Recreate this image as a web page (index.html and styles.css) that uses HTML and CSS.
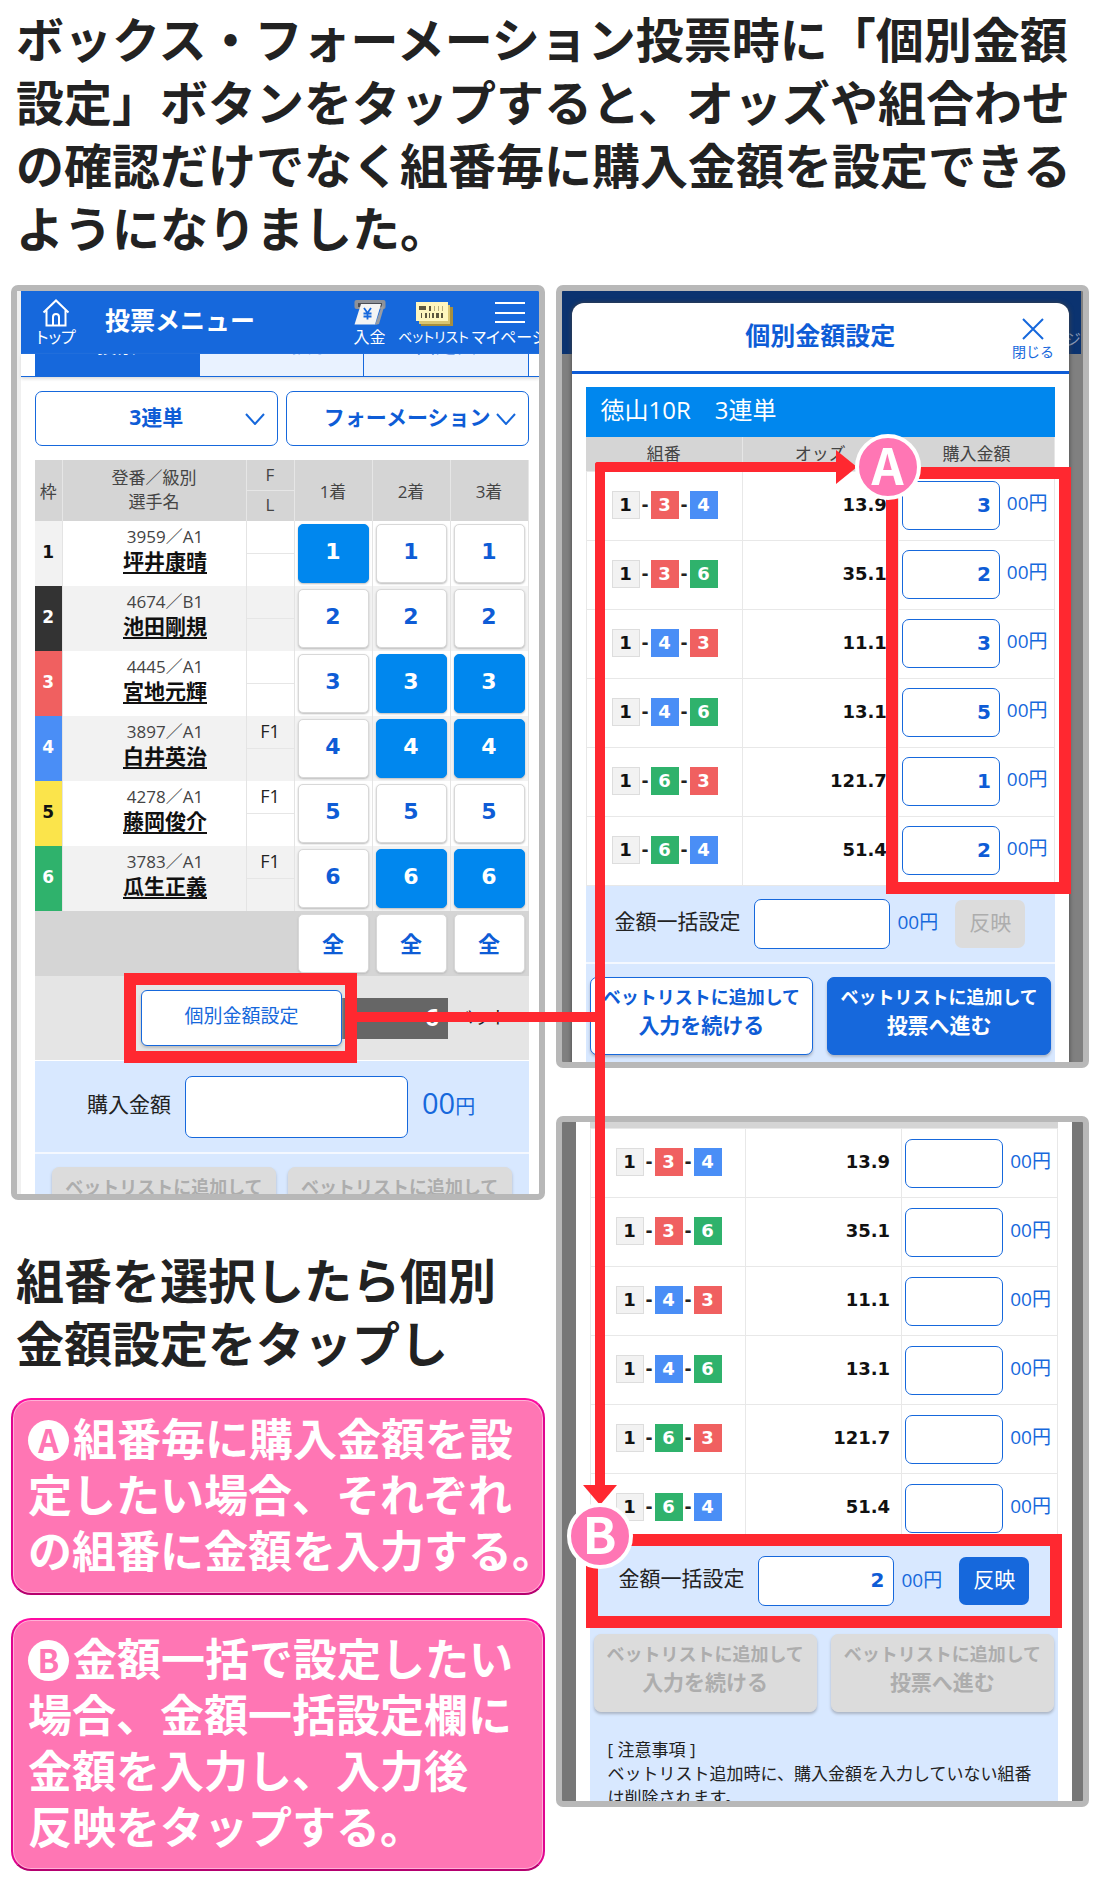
FILE: index.html
```
<!DOCTYPE html>
<html lang="ja">
<head>
  <meta charset="UTF-8">
  <meta name="viewport" content="width=device-width, initial-scale=1.0">
  <title>個別金額設定</title>
  <link rel="stylesheet" href="styles.css">
</head>
<body>
  <h1 class="lead">ボックス・フォーメーション投票時に「個別金額<br>設定」ボタンをタップすると、オッズや組合わせ<br>の確認だけでなく組番毎に購入金額を設定できる<br>ようになりました。</h1>

  <main class="columns">
    <div class="col-left">
      <section class="phone phone-menu">
        <div class="screen">
          <header class="nav">
            <a class="nav-item nav-home" href="#">
              <svg width="28" height="28" viewBox="0 0 28 28" fill="none" stroke="#fff" stroke-width="2">
                <path d="M1.5 13.5 14 1.5l12.500 12M4.500 11v15.500h19V11M11 26.500v-8.500a3 3 0 0 1 6 0v8.500"/>
              </svg>
              <span>トップ</span>
            </a>
            <h2 class="nav-title">投票メニュー</h2>
            <div class="nav-group">
              <a class="nav-item" href="#">
                <svg width="32" height="28" viewBox="0 0 32 28">
                  <rect x="0.500" y="1" width="31" height="9" rx="2" fill="#8d9199"/>
                  <path d="M4 4h24v4H4z" fill="#4a4d55"/>
                  <path d="M28 6 21 26l4-1 5-17z" fill="#9a9da3"/>
                  <path d="M7 5h20l-6 20.500H0.500z" fill="#f4f4f4"/>
                  <path d="M10 9l3.500 5L17 9M13.500 14v6.500M9.500 14.500h8M9.500 17.500h8" fill="none" stroke="#1668dc" stroke-width="1.800"/>
                </svg>
                <span>入金</span>
              </a>
              <a class="nav-item nav-list" href="#">
                <svg width="38" height="28" viewBox="0 0 38 28">
                  <path d="M6 8h32v19H6z" fill="#a88f3c"/>
                  <path d="M4 6h31v19H4z" fill="#d9c574"/>
                  <path d="M1 3h32v19H1z" fill="#fff6be"/>
                  <path d="M4 7h7v4H4zM14 7h2v5h-2zM6 14h1v5H6zM10 14h2v5h-2zM14 14h1v5h-1zM17 14h2v5h-2zM21 14h3v5h-3zM26 14h2v5h-2z" fill="#5d573f"/>
                  <path d="M19 7h1v5h-1zM23 7h1v5h-1zM27 7h1v5h-1z" fill="#b7ad7b"/>
                </svg>
                <span>ベットリスト</span>
              </a>
              <a class="nav-item nav-mypage" href="#">
                <svg width="30" height="28" viewBox="0 0 30 28" stroke="#fff" stroke-width="2">
                  <path d="M0 4h30M0 14h30M0 23h30"/>
                </svg>
                <span>マイページ</span>
              </a>
            </div>
          </header>

          <nav class="tabs">
            <a class="tab tab-on" href="#">投票</a>
            <a class="tab" href="#">オッズ投票</a>
            <a class="tab" href="#">出走表</a>
          </nav>

          <div class="content">
            <div class="selects">
              <label class="select-box">
                <select aria-label="勝式"><option>3連単</option></select>
                <svg width="20" height="12" viewBox="0 0 20 12" fill="none" stroke="#1668dc" stroke-width="2"><path d="M1 1l9 10 9-10"/></svg>
              </label>
              <label class="select-box">
                <select aria-label="投票方法"><option>フォーメーション</option></select>
                <svg width="20" height="12" viewBox="0 0 20 12" fill="none" stroke="#1668dc" stroke-width="2"><path d="M1 1l9 10 9-10"/></svg>
              </label>
            </div>

            <table class="racers">
              <colgroup>
                <col class="c-waku"><col class="c-name"><col class="c-fl"><col class="c-pick"><col class="c-pick"><col class="c-pick">
              </colgroup>
              <thead>
                <tr>
                  <th>枠</th>
                  <th class="two-line">登番／級別<br>選手名</th>
                  <th><div class="fl"><span>F</span><span>L</span></div></th>
                  <th>1着</th><th>2着</th><th>3着</th>
                </tr>
              </thead>
              <tbody>
                <tr>
                  <td class="waku bg1">1</td>
                  <td class="racer">3959／A1<a href="#">坪井康晴</a></td>
                  <td><div class="fl"><span></span><span></span></div></td>
                  <td><button class="pick on">1</button></td><td><button class="pick">1</button></td><td><button class="pick">1</button></td>
                </tr>
                <tr>
                  <td class="waku bg2">2</td>
                  <td class="racer">4674／B1<a href="#">池田剛規</a></td>
                  <td><div class="fl"><span></span><span></span></div></td>
                  <td><button class="pick">2</button></td><td><button class="pick">2</button></td><td><button class="pick">2</button></td>
                </tr>
                <tr>
                  <td class="waku bg3">3</td>
                  <td class="racer">4445／A1<a href="#">宮地元輝</a></td>
                  <td><div class="fl"><span></span><span></span></div></td>
                  <td><button class="pick">3</button></td><td><button class="pick on">3</button></td><td><button class="pick on">3</button></td>
                </tr>
                <tr>
                  <td class="waku bg4">4</td>
                  <td class="racer">3897／A1<a href="#">白井英治</a></td>
                  <td><div class="fl"><span>F1</span><span></span></div></td>
                  <td><button class="pick">4</button></td><td><button class="pick on">4</button></td><td><button class="pick on">4</button></td>
                </tr>
                <tr>
                  <td class="waku bg5">5</td>
                  <td class="racer">4278／A1<a href="#">藤岡俊介</a></td>
                  <td><div class="fl"><span>F1</span><span></span></div></td>
                  <td><button class="pick">5</button></td><td><button class="pick">5</button></td><td><button class="pick">5</button></td>
                </tr>
                <tr>
                  <td class="waku bg6">6</td>
                  <td class="racer">3783／A1<a href="#">瓜生正義</a></td>
                  <td><div class="fl"><span>F1</span><span></span></div></td>
                  <td><button class="pick">6</button></td><td><button class="pick on">6</button></td><td><button class="pick on">6</button></td>
                </tr>
                <tr class="all-row">
                  <td colspan="3"></td>
                  <td><button class="pick">全</button></td><td><button class="pick">全</button></td><td><button class="pick">全</button></td>
                </tr>
              </tbody>
            </table>

            <div class="bets">
              <div class="marked-button"><button class="btn-each">個別金額設定</button></div>
              <span class="bets-count">6</span>
              <span class="bets-unit">ベット</span>
            </div>
            <div class="amount">
              <label for="amount">購入金額</label>
              <input type="text" id="amount">
              <span class="unit"><span class="zeros">00</span>円</span>
            </div>
            <div class="actions actions-menu">
              <button class="action" disabled>ベットリストに追加して<span>入力を続ける</span></button>
              <button class="action" disabled>ベットリストに追加して<span>投票へ進む</span></button>
            </div>
          </div>
        </div>
      </section>

      <h2 class="lead lead-sub">組番を選択したら個別<br>金額設定をタップし</h2>

      <p class="note"><span class="note-mark">A</span>組番毎に購入金額を設<br>定したい場合、それぞれ<br>の組番に金額を入力する。</p>
      <p class="note"><span class="note-mark">B</span>金額一括で設定したい<br>場合、金額一括設定欄に<br>金額を入力し、入力後<br>反映をタップする。</p>
    </div>

    <div class="col-right">
      <section class="phone phone-modal">
        <div class="dimmed-nav">マイページ</div>
        <div class="modal">
          <header class="modal-head">
            <h2>個別金額設定</h2>
            <button class="close">
              <svg width="22" height="22" viewBox="0 0 22 22" stroke="#1668dc" stroke-width="2"><path d="M1 1l20 20M21 1 1 21"/></svg>
              閉じる
            </button>
          </header>
          <div class="modal-body">
            <h3 class="race">徳山10R　3連単</h3>
            <div class="marked-table">
              <table class="odds">
                <thead><tr><th>組番</th><th>オッズ</th><th>購入金額</th></tr></thead>
                <tbody>
                  <tr><td class="combo"><b class="bg1">1</b>-<b class="bg3">3</b>-<b class="bg4">4</b></td><td class="rate">13.9</td><td class="pay"><input type="text" value="3" aria-label="1-3-4"><span class="yen">00円</span></td></tr>
                  <tr><td class="combo"><b class="bg1">1</b>-<b class="bg3">3</b>-<b class="bg6">6</b></td><td class="rate">35.1</td><td class="pay"><input type="text" value="2" aria-label="1-3-6"><span class="yen">00円</span></td></tr>
                  <tr><td class="combo"><b class="bg1">1</b>-<b class="bg4">4</b>-<b class="bg3">3</b></td><td class="rate">11.1</td><td class="pay"><input type="text" value="3" aria-label="1-4-3"><span class="yen">00円</span></td></tr>
                  <tr><td class="combo"><b class="bg1">1</b>-<b class="bg4">4</b>-<b class="bg6">6</b></td><td class="rate">13.1</td><td class="pay"><input type="text" value="5" aria-label="1-4-6"><span class="yen">00円</span></td></tr>
                  <tr><td class="combo"><b class="bg1">1</b>-<b class="bg6">6</b>-<b class="bg3">3</b></td><td class="rate">121.7</td><td class="pay"><input type="text" value="1" aria-label="1-6-3"><span class="yen">00円</span></td></tr>
                  <tr><td class="combo"><b class="bg1">1</b>-<b class="bg6">6</b>-<b class="bg4">4</b></td><td class="rate">51.4</td><td class="pay"><input type="text" value="2" aria-label="1-6-4"><span class="yen">00円</span></td></tr>
                </tbody>
              </table>
              <div class="frame frame-a"></div>
            </div>
            <div class="batch">
              <label for="batch-a">金額一括設定</label>
              <input type="text" id="batch-a">
              <span class="yen">00円</span>
              <button class="apply" disabled>反映</button>
            </div>
            <div class="actions">
              <button class="action">ベットリストに追加して<span>入力を続ける</span></button>
              <button class="action primary">ベットリストに追加して<span>投票へ進む</span></button>
            </div>
          </div>
        </div>
      </section>

      <section class="phone phone-batch">
        <div class="sheet">
          <div class="sheet-top"></div>
          <table class="odds">
            <tbody>
              <tr><td class="combo"><b class="bg1">1</b>-<b class="bg3">3</b>-<b class="bg4">4</b></td><td class="rate">13.9</td><td class="pay"><input type="text" aria-label="1-3-4"><span class="yen">00円</span></td></tr>
              <tr><td class="combo"><b class="bg1">1</b>-<b class="bg3">3</b>-<b class="bg6">6</b></td><td class="rate">35.1</td><td class="pay"><input type="text" aria-label="1-3-6"><span class="yen">00円</span></td></tr>
              <tr><td class="combo"><b class="bg1">1</b>-<b class="bg4">4</b>-<b class="bg3">3</b></td><td class="rate">11.1</td><td class="pay"><input type="text" aria-label="1-4-3"><span class="yen">00円</span></td></tr>
              <tr><td class="combo"><b class="bg1">1</b>-<b class="bg4">4</b>-<b class="bg6">6</b></td><td class="rate">13.1</td><td class="pay"><input type="text" aria-label="1-4-6"><span class="yen">00円</span></td></tr>
              <tr><td class="combo"><b class="bg1">1</b>-<b class="bg6">6</b>-<b class="bg3">3</b></td><td class="rate">121.7</td><td class="pay"><input type="text" aria-label="1-6-3"><span class="yen">00円</span></td></tr>
              <tr><td class="combo"><b class="bg1">1</b>-<b class="bg6">6</b>-<b class="bg4">4</b></td><td class="rate">51.4</td><td class="pay"><input type="text" aria-label="1-6-4"><span class="yen">00円</span></td></tr>
            </tbody>
          </table>
          <div class="batch">
            <label for="batch-b">金額一括設定</label>
            <input type="text" id="batch-b" value="2">
            <span class="yen">00円</span>
            <button class="apply">反映</button>
            <div class="frame frame-b"></div>
          </div>
          <div class="actions">
            <button class="action" disabled>ベットリストに追加して<span>入力を続ける</span></button>
            <button class="action" disabled>ベットリストに追加して<span>投票へ進む</span></button>
          </div>
          <p class="caution">[ 注意事項 ]<br>ベットリスト追加時に、購入金額を入力していない組番は削除されます。</p>
        </div>
      </section>

      <!-- flow arrows, from the button to A and B -->
      <div class="line line-in"></div>
      <div class="line line-down"></div>
      <div class="line line-across"></div>
      <div class="arrow arrow-right"></div>
      <div class="arrow arrow-down"></div>
      <div class="badge badge-a">A</div>
      <div class="badge badge-b">B</div>
    </div>
  </main>
</body>
</html>
```
FILE: styles.css
```
* {
  margin: 0;
  padding: 0;
  box-sizing: border-box;
}

body {
  padding: 6px 11px 28px;
  background: #fff;
  color: #222;
  font-family: "Open Sans", "Noto Sans CJK JP", sans-serif;
  font-size: 17px;
}

button, input, select {
  font-family: inherit;
}

a {
  color: inherit;
  text-decoration: none;
}

.lead {
  padding-left: 5px;
  font-family: "Noto Sans CJK JP", sans-serif;
  font-size: 48px;
  font-weight: 700;
  line-height: 63px;
  white-space: nowrap;
}

.columns {
  display: grid;
  grid-template-columns: 1fr 1fr;
  gap: 11px;
  margin-top: 27px;
}

.col-left {
  min-width: 0;
}

.col-right {
  position: relative;
  min-width: 0;
}

/* phones */
.phone {
  position: relative;
  border: 6px solid #b8b8b8;
  border-radius: 7px;
  overflow: hidden;
  background: #fff;
}

.phone-menu {
  height: 915px;
}

.phone-modal {
  height: 783px;
  margin-bottom: 48px;
  background: #808080;
}

.phone-batch {
  height: 691px;
  background: #777;
}

.screen {
  border-left: 4px solid #f0f0f0;
}

/* top bar */
.nav {
  display: flex;
  align-items: center;
  height: 63px;
  padding-left: 10px;
  background: #1668dc;
  color: #fff;
}

.nav-item {
  display: flex;
  flex-direction: column;
  align-items: center;
  width: 50px;
  font-size: 16px;
  line-height: 20px;
  white-space: nowrap;
  font-feature-settings: "palt";
}

.nav-title {
  margin-left: 24px;
  padding-bottom: 6px;
  font-size: 25px;
  line-height: 30px;
}

.nav-group {
  display: flex;
  margin-left: auto;
  margin-right: -8px;
}

.nav-list {
  width: 78px;
  font-size: 14px;
}

.nav-mypage {
  width: 74px;
}

.tabs {
  display: flex;
  align-items: flex-end;
  height: 23px;
  padding: 0 10px 0 14px;
  overflow: hidden;
  border-bottom: 1px solid #1668dc;
  box-shadow: 0 2px 3px #ddd;
}

.tab {
  flex: 1;
  height: 60px;
  border-right: 1px solid #1668dc;
  background: #e9f2ff;
  color: #1668dc;
  font-size: 20px;
  line-height: 60px;
  text-align: center;
}

.tab-on {
  background: #1668dc;
  color: #fff;
  font-weight: 700;
}

.content {
  padding: 14px 10px 0 14px;
}

.selects {
  display: grid;
  grid-template-columns: 1fr 1fr;
  gap: 8px;
  margin-bottom: 14px;
}

.select-box {
  display: flex;
  align-items: center;
  height: 55px;
  padding-right: 12px;
  border: 1px solid #1668dc;
  border-radius: 7px;
}

.select-box select {
  flex: 1;
  min-width: 0;
  height: 53px;
  padding: 0 0 4px 32px;
  border: none;
  outline: none;
  appearance: none;
  background: none;
  color: #0e5cd6;
  font-size: 21px;
  font-weight: 700;
  text-align: center;
  text-align-last: center;
}

/* racer table */
.racers {
  width: 100%;
  table-layout: fixed;
  border-collapse: collapse;
}

.c-waku { width: 27px; }
.c-name { width: 184px; }
.c-fl { width: 48px; }

.racers th {
  height: 61px;
  border-right: 1px solid #e6e6e6;
  background: #d5d5d5;
  color: #444;
  font-size: 17px;
  font-weight: 400;
}

.racers .two-line {
  padding-bottom: 2px;
  line-height: 24px;
}

.racers td {
  height: 65px;
  border-right: 1px solid #e4e4e4;
  text-align: center;
}

.racers tbody tr:nth-child(even) {
  background: #f2f2f2;
}

.racers .all-row {
  background: #d5d5d5;
}

.racers .all-row td {
  border-color: #d5d5d5;
}

.racers .waku {
  padding-bottom: 4px;
  font-family: "DejaVu Sans", sans-serif;
  font-weight: 700;
}

.racers .racer {
  padding: 0 0 10px 22px;
  color: #444;
  line-height: 24px;
}

.racer a {
  display: block;
  color: #111;
  font-size: 21px;
  font-weight: 700;
  text-decoration: underline;
  text-decoration-thickness: 2px;
  text-underline-offset: 3px;
}

.fl {
  display: flex;
  flex-direction: column;
}

.fl span {
  min-height: 30px;
  line-height: 28px;
}

.fl span:first-child {
  border-bottom: 1px solid #e6e6e6;
}

td .fl span {
  min-height: 32px;
  color: #222;
  font-size: 18px;
}

.pick {
  display: block;
  width: calc(100% - 6px);
  height: 59px;
  margin: 0 auto;
  padding-bottom: 4px;
  border: 1px solid #d8d8d8;
  border-radius: 5px;
  background: #fff;
  box-shadow: 0 1px 2px #bbb;
  color: #0e5cd6;
  font-family: "DejaVu Sans", "Noto Sans CJK JP", sans-serif;
  font-size: 22px;
  font-weight: 700;
}

.pick.on {
  border-color: #0087ee;
  background: #0087ee;
  color: #fff;
}

.bg1 { background: #f2f2f2; color: #111; }
.bg2 { background: #333; color: #fff; }
.bg3 { background: #f06060; color: #fff; }
.bg4 { background: #4a8ef6; color: #fff; }
.bg5 { background: #fbe44b; color: #111; }
.bg6 { background: #2fb26c; color: #fff; }

.bets {
  display: flex;
  align-items: center;
  height: 84px;
  padding-left: 106px;
  background: #e5e5e5;
  font-size: 18px;
}

.marked-button {
  position: relative;
  width: 201px;
}

.marked-button::before {
  content: "";
  position: absolute;
  inset: -17px -15px -17px -17px;
  border: 12px solid #ff2830;
}

.btn-each {
  width: 100%;
  height: 56px;
  padding-bottom: 6px;
  border: 1px solid #1668dc;
  border-radius: 6px;
  background: #fff;
  box-shadow: 0 2px 3px #bbb;
  color: #1668dc;
  font-size: 19px;
}

.bets-count {
  width: 106px;
  margin-right: 7px;
  padding: 0 9px 4px 0;
  background: #666;
  color: #fff;
  font-size: 24px;
  font-weight: 700;
  line-height: 37px;
  text-align: right;
}

.bets-unit {
  padding-bottom: 4px;
}

.amount {
  display: flex;
  align-items: center;
  height: 92px;
  padding-left: 52px;
  border-top: 1px solid #fff;
  background: #d8e8ff;
  font-size: 21px;
}

.amount label,
.unit {
  padding-bottom: 8px;
}

.amount input {
  width: 223px;
  height: 62px;
  margin: 0 14px;
}

.unit {
  color: #1668dc;
  font-size: 20px;
  white-space: nowrap;
}

.zeros {
  font-size: 29px;
}

.amount input,
.batch input,
.pay input {
  border: 1px solid #1668dc;
  border-radius: 7px;
  outline: none;
  background: #fff;
  color: #0e5cd6;
  font-family: "DejaVu Sans", sans-serif;
  font-size: 20px;
  font-weight: 700;
  text-align: right;
}

.actions {
  display: grid;
  grid-template-columns: 1fr 1fr;
  gap: 14px;
  padding: 13px 4px 20px;
  border-top: 2px solid #f4f8ff;
  background: #d8e8ff;
}

.actions-menu {
  gap: 12px;
  padding: 13px 17px;
}

.action {
  min-width: 0;
  height: 78px;
  padding-bottom: 10px;
  border: 1px solid #1668dc;
  border-radius: 7px;
  background: #fff;
  box-shadow: 0 2px 3px #aab4c4;
  color: #0e5cd6;
  font-size: 18px;
  font-weight: 700;
  line-height: 28px;
  white-space: nowrap;
}

.action span {
  display: block;
  font-size: 21px;
}

.action.primary {
  background: #1668dc;
  color: #fff;
}

.action:disabled {
  border-color: #dcdcdc;
  background: #dcdcdc;
  color: #adadad;
}

/* modal */
.dimmed-nav {
  position: absolute;
  inset: 0 2px auto 0;
  height: 63px;
  padding-top: 36px;
  background: #0b3370;
  color: #8899b7;
  font-size: 16px;
  line-height: 24px;
  text-align: right;
}

.modal {
  position: relative;
  margin: 12px 14px 0 10px;
  border-radius: 12px 12px 0 0;
  background: #fff;
  box-shadow: 0 0 5px #444;
}

.modal-head {
  position: relative;
  height: 71px;
  border-bottom: 3px solid #0e5cd6;
  color: #0e5cd6;
  text-align: center;
}

.modal-head h2 {
  font-size: 25px;
  line-height: 64px;
}

.close {
  position: absolute;
  top: 15px;
  right: 15px;
  display: flex;
  flex-direction: column;
  align-items: center;
  gap: 2px;
  border: none;
  background: none;
  color: #1668dc;
  font-size: 14px;
  line-height: 20px;
}

.modal-body {
  padding: 13px 14px 0;
}

.race {
  padding: 0 15px 4px;
  background: #0087ee;
  color: #fff;
  font-size: 24px;
  font-weight: 400;
  line-height: 46px;
}

.marked-table {
  position: relative;
  z-index: 1;
}

.odds {
  width: 100%;
  table-layout: fixed;
  border-collapse: collapse;
}

.odds th {
  height: 34px;
  border-right: 1px solid #e6e6e6;
  background: #d5d5d5;
  color: #444;
  font-size: 17px;
  font-weight: 400;
  line-height: 24px;
}

.odds td {
  height: 69px;
  border: 1px solid #e8e8e8;
}

.odds .combo {
  padding: 0 0 2px 25px;
  font-family: "DejaVu Sans", sans-serif;
  font-weight: 700;
  white-space: nowrap;
}

.combo b {
  display: inline-block;
  width: 28px;
  margin: 0 2px;
  font-size: 18px;
  line-height: 28px;
  text-align: center;
}

.combo b:first-child {
  margin-left: 0;
  box-shadow: inset 0 0 0 1px #ddd;
}

.odds .rate {
  padding: 0 11px 3px 0;
  color: #111;
  font-family: "DejaVu Sans", sans-serif;
  font-size: 18px;
  font-weight: 700;
  text-align: right;
}

.pay {
  padding-left: 3px;
  white-space: nowrap;
}

.pay input {
  width: 98px;
  height: 49px;
  padding: 0 8px 2px 0;
  vertical-align: middle;
}

.yen {
  color: #1668dc;
  font-size: 19px;
}

.pay .yen {
  margin-left: 7px;
}

.batch {
  position: relative;
  display: flex;
  align-items: center;
  padding: 13px 0 13px 29px;
  background: #d8e8ff;
  white-space: nowrap;
}

.batch label {
  padding-bottom: 8px;
  font-size: 21px;
}

.batch .yen {
  padding-bottom: 5px;
}

.batch input {
  width: 136px;
  height: 50px;
  margin: 0 8px 0 13px;
  padding: 0 8px 3px 0;
}

.apply {
  width: 70px;
  height: 48px;
  margin-left: 17px;
  padding-bottom: 6px;
  border: none;
  border-radius: 7px;
  background: #1668dc;
  color: #fff;
  font-size: 21px;
}

.apply:disabled {
  background: #dcdcdc;
  color: #adadad;
}

.sheet {
  margin: 0 11px 0 14px;
  padding: 0 14px;
  background: #fff;
}

.sheet-top {
  height: 6px;
  background: #d5d5d5;
}

.caution {
  padding: 6px 24px 40px 18px;
  background: #d8e8ff;
  font-size: 17px;
  line-height: 24px;
}

/* red marks */
.frame {
  position: absolute;
  border: 12px solid #ff2830;
}

.frame-a {
  top: 30px;
  right: -16px;
  bottom: -8px;
  width: 185px;
}

.frame-b {
  inset: -9px -4px;
}

.line {
  position: absolute;
  z-index: 2;
  background: #ff2830;
}

.line-in {
  top: 727px;
  left: -199px;
  width: 248px;
  height: 10px;
}

.line-down {
  top: 177px;
  left: 39px;
  width: 10px;
  height: 1030px;
  border-top-left-radius: 3px;
}

.line-across {
  top: 177px;
  left: 39px;
  width: 245px;
  height: 10px;
  border-top-left-radius: 3px;
}

.arrow {
  position: absolute;
  z-index: 2;
  border: 17px solid transparent;
}

.arrow-right {
  top: 165px;
  left: 280px;
  border-width: 17px 0 17px 21px;
  border-left-color: #ff2830;
}

.arrow-down {
  top: 1200px;
  left: 27px;
  border-width: 20px 17px 0;
  border-top-color: #ff2830;
}

.badge {
  position: absolute;
  z-index: 3;
  width: 66px;
  height: 66px;
  border: 4px solid #fff;
  border-radius: 50%;
  background: #ff76b4;
  color: #fff;
  font-family: "Noto Sans CJK JP", sans-serif;
  font-size: 50px;
  font-weight: 700;
  line-height: 50px;
  text-align: center;
}

.badge-a {
  top: 149px;
  left: 299px;
}

.badge-b {
  top: 1218px;
  left: 11px;
}

/* lower left */
.lead-sub {
  margin: 47px 0 25px;
}

.note {
  margin-bottom: 23px;
  padding: 9px 0 16px 15px;
  border: 2px solid #d8008c;
  border-color: #ff0aa2 #e0048f #b5006f;
  border-radius: 20px;
  background: #ff76b4;
  box-shadow: inset 0 0 0 1px #ffb0d6;
  color: #fff;
  font-family: "Noto Sans CJK JP", sans-serif;
  font-size: 44px;
  font-weight: 700;
  line-height: 56px;
  white-space: nowrap;
}

.note-mark {
  display: inline-block;
  width: 41px;
  height: 41px;
  margin-right: 4px;
  border-radius: 50%;
  background: #fff;
  color: #ff76b4;
  font-size: 32px;
  line-height: 38px;
  text-align: center;
  vertical-align: 3px;
}
```
